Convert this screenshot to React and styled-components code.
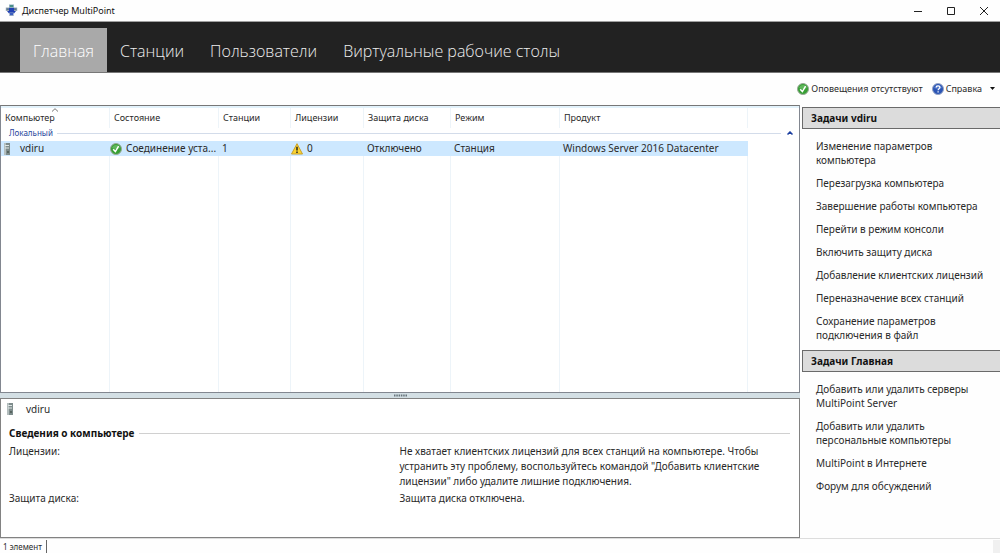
import React from "react";
import styled, { createGlobalStyle, css } from "styled-components";

const Global = createGlobalStyle`
  *, *::before, *::after { box-sizing: border-box; }
  body { margin: 0; background: #fff; }
  button { font: inherit; color: inherit; background: none; border: 0; padding: 0; text-align: left; }
  h1, h2, p, ul, dl, dd, dt { margin: 0; padding: 0; font: inherit; }
  ul { list-style: none; }
  svg { flex-shrink: 0; }
`;

const Window = styled.div`
  min-height: 100vh;
  display: flex;
  flex-direction: column;
  background: #fefefe;
  color: #2a2a2a;
  font-family: "Noto Sans", "Open Sans", sans-serif;
  font-size: 10px;
  line-height: 14px;
`;

const TitleBar = styled.header`
  display: flex;
  align-items: center;
  height: 22px;
  padding-left: 5px;
  border-bottom: 1px solid #a0a0a0;
`;

const AppTitle = styled.h1`
  flex: 1;
  padding-left: 4px;
  font-size: 9px;
  color: #111;
`;

const WindowControl = styled.button`
  display: flex;
  align-items: center;
  justify-content: center;
  width: 33px;
  height: 20px;
`;

const Nav = styled.nav`
  display: flex;
  height: 51px;
  padding: 6px 0 0 20px;
  background: #222;
  border-bottom: 1px solid #777;
`;

const NavTab = styled.button`
  padding: 2px 13px 0;
  font-family: "Open Sans", "Noto Sans", sans-serif;
  font-weight: 300;
  font-size: 16px;
  line-height: 24px;
  color: ${(p) => (p.$active ? "#fff" : "#eee")};
  background: ${(p) => (p.$active ? "#a9a9a9" : "transparent")};
`;

const Toolbar = styled.div`
  display: flex;
  justify-content: flex-end;
  align-items: center;
  gap: 9px;
  height: 32px;
  padding-right: 5px;
  font-size: 9px;
`;

const ToolButton = styled.button`
  display: flex;
  align-items: center;
  gap: 2px;
`;

const Body = styled.main`
  flex: 1;
  display: grid;
  grid-template-columns: minmax(0, 4fr) minmax(0, 1fr);
`;

const Left = styled.div`
  display: flex;
  flex-direction: column;
`;

const Panel = styled.section`
  border: 1px solid #828790;
  background: #fff;
`;

const ListPanel = styled(Panel)`
  flex: 1;
  display: flex;
  border-top-color: #777;
`;

const Table = styled.table`
  width: 100%;
  height: 100%;
  table-layout: fixed;
  border-collapse: separate;
  border-spacing: 0;
  border-top: 2px solid #e2f2fb;
  th, td { text-align: left; font-weight: 400; white-space: nowrap; }
`;

const line = css`
  border-right: 1px solid #edf4f9;
  &:last-child { border-right: 0; }
`;

const HeadCell = styled.th`
  ${line}
  position: relative;
  height: 20px;
  padding: 0 0 0 4px;
  font-size: 9px;
`;

const SortMark = styled.svg`
  position: absolute;
  top: 0;
  left: 50%;
  transform: translateX(-50%);
`;

const GroupCell = styled.td`
  height: 13px;
  padding: 0 4px 3px 8px;
`;

const GroupHead = styled.div`
  display: flex;
  align-items: center;
  gap: 4px;
  height: 10px;
  padding-right: 2px;
  font-size: 8px;
  line-height: 10px;
  color: #28479c;
  &::after { content: ""; order: 1; flex: 1; height: 1px; background: #d3dcea; }
  svg { order: 2; margin-left: 2px; }
`;

const Cell = styled.td`
  height: 15px;
  padding: 0 2px 0 ${(p) => (p.$icon ? 0 : 3)}px;
  line-height: 15px;
  background: ${(p) => (p.$empty ? "transparent" : "#cde8ff")};
`;

const Blank = styled.td`
  ${line}
  height: 100%;
  padding: 0;
`;

const IconText = styled.div`
  display: flex;
  align-items: center;
  gap: ${(p) => p.$gap}px;
`;

const Splitter = styled.div`
  display: flex;
  align-items: center;
  justify-content: center;
  height: 5px;
  background: #d3dfe4;
`;

const DetailPanel = styled(Panel)`
  height: 140px;
  padding: 3px 9px 0 6px;
  border-color: #828282;
`;

const Section = styled.h2`
  display: flex;
  align-items: center;
  gap: 5px;
  padding: 10px 0 4px 2px;
  font-weight: 700;
  color: #111;
  &::after { content: ""; flex: 1; height: 1px; background: #d0d0d0; }
`;

const Details = styled.dl`
  display: grid;
  grid-template-columns: 1fr 1fr;
  row-gap: 2px;
  padding-left: 2px;
  line-height: 15px;
`;

const Side = styled.aside`
  padding: 2px 0 0 2px;
`;

const SideTitle = styled.h2`
  height: 22px;
  padding-left: 8px;
  border: 1px solid #6a6a6a;
  border-right: 0;
  background: #dcdcdc;
  font-weight: 700;
  line-height: 20px;
  color: #111;
`;

const TaskList = styled.ul`
  display: flex;
  flex-direction: column;
  gap: 9px;
  padding: 10px 16px 8px 14px;
`;

const Task = styled.button`
  display: block;
`;

const StatusBar = styled.footer`
  display: flex;
  justify-content: space-between;
  height: 15px;
  padding-top: 1px;
  border-top: 1px solid #ddd;
  font-size: 8px;
  line-height: 14px;
`;

const StatusCell = styled.div`
  padding: 0 4px 0 3px;
  border-right: 1px solid #666;
`;

const Grip = styled.div`
  width: 7px;
  background: #f0f0f0;
`;

const AppIcon = () => (
  <svg width="13" height="13" viewBox="0 0 13 13">
    <path d="M4 .5H9V4H4Z" fill="#8fb0c0" />
    <path d="M5 1H8V3H5Z" fill="#4a8f86" />
    <path d="M.8 3.5H4.5V7H.8ZM8.5 3.5H12.2V7H8.5Z" fill="#9aa8b4" />
    <path d="M1.5 4.2H4V6H1.5ZM9 4.2H11.5V6H9Z" fill="#5c7890" />
    <path d="M4 4H9V7H11L9 9.5H4L2 7H4Z" fill="#2140b4" />
    <path d="M4.3 8.5H8.7V12H4.3Z" fill="#93a7c4" />
    <path d="M5 9H8V11H5Z" fill="#3c5fc0" />
  </svg>
);

const Check = () => (
  <svg width="12" height="12" viewBox="0 0 12 12">
    <circle cx="6" cy="6" r="5.5" fill="#37a034" stroke="#9aa898" />
    <path d="M2 5A4.2 4.2 0 0 1 10 5Q6 7 2 5Z" fill="#7cc678" opacity=".6" />
    <path d="M3.2 6.2 5.4 8.6 8.6 3.2" fill="none" stroke="#fff" strokeWidth="1.5" />
  </svg>
);

const Help = () => (
  <svg width="12" height="12" viewBox="0 0 12 12">
    <circle cx="6" cy="6" r="5.5" fill="#2b55b5" stroke="#94a3c4" />
    <path d="M2 5A4.2 4.2 0 0 1 10 5Q6 7 2 5Z" fill="#7a9ae0" opacity=".5" />
    <path d="M4.2 4.6C4.2 2.4 7.9 2.4 7.9 4.5 7.9 5.7 6.1 5.7 6.1 7.2M6.1 8.2V9.5" fill="none" stroke="#fff" strokeWidth="1.3" />
  </svg>
);

const Warning = () => (
  <svg width="12" height="12" viewBox="0 0 12 12">
    <path d="M6 .7 11.5 11H.5Z" fill="#fbd42f" stroke="#c9a02a" strokeLinejoin="round" />
    <path d="M6 3.8V7.6M6 8.6V10" stroke="#222" strokeWidth="1.5" />
  </svg>
);

const Server = () => (
  <svg width="6" height="12" viewBox="0 0 6 12">
    <rect width="6" height="12" fill="#7e8c8c" />
    <rect x="0" width="2" height="12" fill="#b4bebe" />
    <path d="M1 2.5H5M1 5H5" stroke="#dfe6e6" />
    <rect x="3" y="8" width="2" height="2" fill="#56645f" />
  </svg>
);

const columns = [
  ["Компьютер", 109], ["Состояние", 109], ["Станции", 72], ["Лицензии", 73],
  ["Защита диска", 87], ["Режим", 109], ["Продукт", 188],
];

const Col = styled.col`
  width: ${(p) => (p.$share / 798) * 100}%;
`;

const computerTasks = [
  "Изменение параметров компьютера", "Перезагрузка компьютера", "Завершение работы компьютера",
  "Перейти в режим консоли", "Включить защиту диска", "Добавление клиентских лицензий",
  "Переназначение всех станций", "Сохранение параметров подключения в файл",
];

const homeTasks = [
  "Добавить или удалить серверы MultiPoint Server", "Добавить или удалить персональные компьютеры",
  "MultiPoint в Интернете", "Форум для обсуждений",
];

const Tasks = ({ title, items }) => (
  <section>
    <SideTitle>{title}</SideTitle>
    <TaskList>{items.map((t) => <li key={t}><Task>{t}</Task></li>)}</TaskList>
  </section>
);

export default function App() {
  return (
    <Window>
      <Global />
      <TitleBar>
        <AppIcon />
        <AppTitle>Диспетчер MultiPoint</AppTitle>
        <WindowControl aria-label="Свернуть"><svg width="8" height="8"><path d="M0 4.5H8" stroke="#222" /></svg></WindowControl>
        <WindowControl aria-label="Развернуть"><svg width="8" height="8"><path d="M.5.5H7.5V7.5H.5Z" fill="none" stroke="#222" /></svg></WindowControl>
        <WindowControl aria-label="Закрыть"><svg width="8" height="8"><path d="M0 0 8 8M8 0 0 8" stroke="#222" /></svg></WindowControl>
      </TitleBar>
      <Nav>
        {["Главная", "Станции", "Пользователи", "Виртуальные рабочие столы"].map((t, i) => (
          <NavTab key={t} $active={i === 0}>{t}</NavTab>
        ))}
      </Nav>
      <Toolbar>
        <ToolButton><Check />Оповещения отсутствуют</ToolButton>
        <ToolButton>
          <Help />Справка
          <svg width="11" height="4"><path d="M6 0H11L8.5 3Z" fill="#111" /></svg>
        </ToolButton>
      </Toolbar>
      <Body>
        <Left>
          <ListPanel>
            <Table>
              <colgroup>
                {columns.map(([n, w]) => <Col key={n} $share={w} />)}
                <col />
              </colgroup>
              <thead>
                <tr>
                  {columns.map(([n], i) => (
                    <HeadCell key={n}>
                      {i === 0 && <SortMark width="7" height="4"><path d="M.5 3.5 3.5.7 6.5 3.5" fill="none" stroke="#777" /></SortMark>}
                      {n}
                    </HeadCell>
                  ))}
                  <HeadCell />
                </tr>
              </thead>
              <tbody>
                <tr>
                  <GroupCell colSpan={8}>
                    <GroupHead>
                      Локальный
                      <svg width="6" height="4"><path d="M.5 3.5 3 1 5.5 3.5" fill="none" stroke="#1c3fa0" strokeWidth="1.5" /></svg>
                    </GroupHead>
                  </GroupCell>
                </tr>
                <tr>
                  <Cell><IconText $gap={10}><Server />vdiru</IconText></Cell>
                  <Cell $icon><IconText $gap={4}><Check />Соединение уста...</IconText></Cell>
                  <Cell>1</Cell>
                  <Cell $icon><IconText $gap={4}><Warning />0</IconText></Cell>
                  <Cell>Отключено</Cell>
                  <Cell>Станция</Cell>
                  <Cell>Windows Server 2016 Datacenter</Cell>
                  <Cell $empty />
                </tr>
                <tr>{[0, 1, 2, 3, 4, 5, 6, 7].map((n) => <Blank key={n} />)}</tr>
              </tbody>
            </Table>
          </ListPanel>
          <Splitter><svg width="13" height="3"><path d="M0 1.5H13" stroke="#68757c" strokeWidth="2" strokeDasharray="1.5 .8" /></svg></Splitter>
          <DetailPanel>
            <IconText $gap={13}><Server />vdiru</IconText>
            <Section>Сведения о компьютере</Section>
            <Details>
              <dt>Лицензии:</dt>
              <dd>Не хватает клиентских лицензий для всех станций на компьютере. Чтобы устранить эту проблему, воспользуйтесь командой "Добавить клиентские лицензии" либо удалите лишние подключения.</dd>
              <dt>Защита диска:</dt>
              <dd>Защита диска отключена.</dd>
            </Details>
          </DetailPanel>
        </Left>
        <Side>
          <Tasks title="Задачи vdiru" items={computerTasks} />
          <Tasks title="Задачи Главная" items={homeTasks} />
        </Side>
      </Body>
      <StatusBar><StatusCell>1 элемент</StatusCell><Grip /></StatusBar>
    </Window>
  );
}
